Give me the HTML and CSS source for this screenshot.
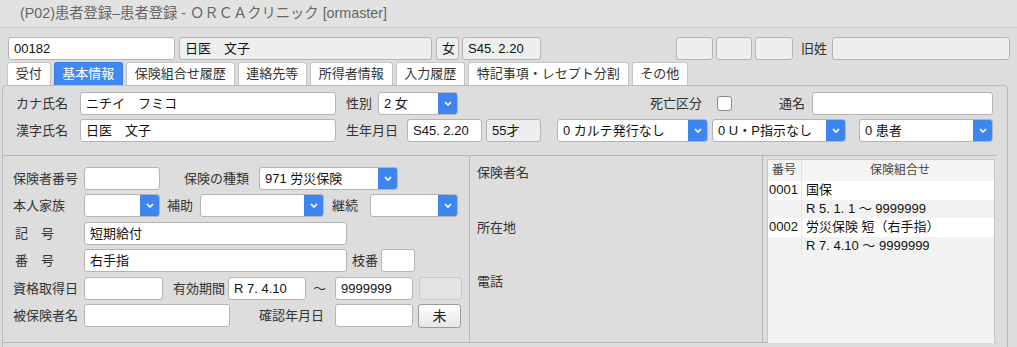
FILE: index.html
```html
<!DOCTYPE html>
<html lang="ja">
<head>
  <meta charset="UTF-8" />
  <title>(P02)患者登録–患者登録</title>
  <link rel="stylesheet" href="styles.css">
</head>
<body>
  <div class="titlebar">(P02)患者登録–患者登録 - ＯＲＣＡクリニック [ormaster]</div>

  <div class="toprow">
    <div class="field w167">00182</div>
    <div class="field ro w253 ml4">日医　文子</div>
    <div class="field ro w23 ml4 center">女</div>
    <div class="field ro w79 ml3">S45. 2.20</div>
    <div class="field ro w37 ml135"></div>
    <div class="field ro w36 ml3"></div>
    <div class="field ro w38 ml3"></div>
    <div class="label w31 ml8">旧姓</div>
    <div class="field ro w178"></div>
  </div>

  <div class="tabs">
    <div class="tab">受付</div>
    <div class="tab active">基本情報</div>
    <div class="tab">保険組合せ履歴</div>
    <div class="tab">連絡先等</div>
    <div class="tab">所得者情報</div>
    <div class="tab">入力履歴</div>
    <div class="tab">特記事項・レセプト分割</div>
    <div class="tab">その他</div>
  </div>

  <div class="frame">
    <div class="basic">
      <div class="row">
        <div class="label w64">カナ氏名</div>
        <div class="field w256">ニチイ　フミコ</div>
        <div class="label w32 ml10">性別</div>
        <div class="select w80"><span>2 女</span><i class="arrow"></i></div>
        <div class="label w67 ml192">死亡区分</div>
        <div class="check"></div>
        <div class="label w33 ml47">通名</div>
        <div class="field w181"></div>
      </div>
      <div class="row">
        <div class="label w64">漢字氏名</div>
        <div class="field w256">日医　文子</div>
        <div class="label w61 ml10">生年月日</div>
        <div class="field w75">S45. 2.20</div>
        <div class="field ro w55 ml4">55才</div>
        <div class="select w151 ml16"><span>0 カルテ発行なし</span><i class="arrow"></i></div>
        <div class="select w134 ml4"><span>0 U・P指示なし</span><i class="arrow"></i></div>
        <div class="select w134 ml13"><span>0 患者</span><i class="arrow"></i></div>
      </div>
    </div>

    <div class="lower">
      <div class="insurance">
        <div class="row">
          <div class="label w71">保険者番号</div>
          <div class="field w76"></div>
          <div class="label w75 ml24">保険の種類</div>
          <div class="select w139"><span>971 労災保険</span><i class="arrow"></i></div>
        </div>
        <div class="row">
          <div class="label w71">本人家族</div>
          <div class="select w76"><span></span><i class="arrow"></i></div>
          <div class="label w33 ml7">補助</div>
          <div class="select w124"><span></span><i class="arrow"></i></div>
          <div class="label w38 ml8">継続</div>
          <div class="select w88"><span></span><i class="arrow"></i></div>
        </div>
        <div class="row">
          <div class="label w71 indent">記　号</div>
          <div class="field w263">短期給付</div>
        </div>
        <div class="row">
          <div class="label w71 indent">番　号</div>
          <div class="field w263">右手指</div>
          <div class="label w29 ml5">枝番</div>
          <div class="field w34"></div>
        </div>
        <div class="row">
          <div class="label w71">資格取得日</div>
          <div class="field w79"></div>
          <div class="label w55 ml10">有効期間</div>
          <div class="field w78">R 7. 4.10</div>
          <div class="label w22 ml7">〜</div>
          <div class="field w78">9999999</div>
          <div class="field off w43 ml6"></div>
        </div>
        <div class="row">
          <div class="label w71">被保険者名</div>
          <div class="field w146"></div>
          <div class="label w76 ml29">確認年月日</div>
          <div class="field w78"></div>
          <div class="btn w43 ml5">未</div>
        </div>
      </div>

      <div class="insurer">
        <div class="info">保険者名</div>
        <div class="info">所在地</div>
        <div class="info">電話</div>
      </div>

      <div class="combos">
        <div class="table">
          <div class="trow head"><div class="no">番号</div><div class="desc center">保険組合せ</div></div>
          <div class="trow"><div class="no">0001</div><div class="desc">国保</div></div>
          <div class="trow alt"><div class="no"></div><div class="desc">R 5. 1. 1 〜 9999999</div></div>
          <div class="trow"><div class="no">0002</div><div class="desc">労災保険 短（右手指）</div></div>
          <div class="trow alt"><div class="no"></div><div class="desc">R 7. 4.10 〜 9999999</div></div>
        </div>
      </div>
    </div>
  </div>
</body>
</html>
```

FILE: styles.css
```css
* {
  box-sizing: border-box;
}

body {
  margin: 0;
  height: 347px;
  overflow: hidden;
  background: #dddddd;
  color: #333;
  font-family: "Liberation Sans", "Noto Sans CJK JP", sans-serif;
  font-size: 13px;
}

.titlebar {
  height: 28px;
  line-height: 27px;
  padding-left: 20px;
  font-size: 14.3px;
  color: #666;
  background: #e2e2e2;
  border-bottom: 1px solid #c4c4c4;
}

.toprow {
  display: flex;
  margin-top: 9px;
  padding-left: 8px;
  height: 23px;
}

.field {
  height: 23px;
  line-height: 21px;
  padding: 0 5px;
  background: #fff;
  border: 1px solid #b4b4b4;
  border-radius: 3px;
  white-space: nowrap;
  overflow: hidden;
  color: #111;
}

.field.ro {
  background: #eeeeee;
}

.field.off {
  background: #e3e3e3;
  border-color: #c8c8c8;
}

.center {
  text-align: center;
}

.label {
  height: 23px;
  line-height: 23px;
  white-space: nowrap;
  color: #333;
}

.label.indent {
  padding-left: 2px;
}

.select {
  display: flex;
  height: 23px;
  background: #fff;
  border: 1px solid #b4b4b4;
  border-radius: 3px;
  overflow: hidden;
  color: #111;
}

.select span {
  flex: 1;
  line-height: 21px;
  padding-left: 5px;
  white-space: nowrap;
  overflow: hidden;
}

.arrow {
  width: 20px;
  margin: -1px -1px -1px 0;
  background: #3f85f0 url("data:image/svg+xml,%3Csvg xmlns='http://www.w3.org/2000/svg' width='8' height='5' viewBox='0 0 8 5'%3E%3Cpath d='M1 1l3 3 3-3' fill='none' stroke='%23fff' stroke-width='1.6'/%3E%3C/svg%3E") no-repeat center;
  border-radius: 0 3px 3px 0;
}

.check {
  width: 15px;
  height: 15px;
  margin-top: 4px;
  background: #fff;
  border: 1px solid #8a8a8a;
  border-radius: 3px;
}

.btn {
  height: 24px;
  line-height: 22px;
  text-align: center;
  font-size: 14px;
  background: linear-gradient(#ffffff, #e6e6e6);
  border: 1px solid #9a9a9a;
  border-radius: 3px;
  color: #222;
}

/* tabs */
.tabs {
  display: flex;
  gap: 3px;
  margin-top: 2px;
  padding-left: 7px;
  height: 23px;
}

.tab {
  padding: 0 7.75px;
  line-height: 22px;
  background: #fff;
  border: 1px solid #c6c6c6;
  border-bottom: none;
  border-radius: 3px 3px 0 0;
  color: #333;
}

.tab.active {
  background: #4088f2;
  border-color: #3a7de0;
  color: #fff;
}

/* frame */
.frame {
  margin-left: 2px;
  width: 1006px;
  height: 262px;
  border: 1px solid #bcbcbc;
  border-bottom: none;
  border-radius: 4px 4px 0 0;
}

.basic {
  display: flex;
  flex-direction: column;
  gap: 4px;
  height: 69px;
  padding: 6px 0 0 13px;
}

.row {
  display: flex;
}

.lower {
  display: flex;
  width: 994px;
  height: 188px;
  border-top: 1px solid #b8b8b8;
  border-bottom: 1px solid #b8b8b8;
}

.insurance {
  width: 467px;
  display: flex;
  flex-direction: column;
  gap: 4.4px;
  padding: 11px 0 0 10px;
  border-right: 1px solid #b8b8b8;
}

.insurer {
  width: 293px;
  padding: 7px 0 0 7px;
  border-right: 1px solid #b8b8b8;
}

.info {
  height: 54.5px;
  line-height: 20px;
}

.combos {
  flex: 1;
  padding: 3px 2px 0 4px;
}

.table {
  height: 184px;
  background: #f2f2f2;
  border: 1px solid #c8c8c8;
  border-bottom: none;
}

.trow {
  display: flex;
  height: 18.5px;
  line-height: 18px;
  background: #fff;
  color: #111;
}

.trow.alt {
  background: #f2f2f2;
}

.trow.head {
  height: 21px;
  line-height: 21px;
  font-size: 12px;
  background: #f4f4f4;
  color: #444;
}

.trow .no {
  width: 34px;
  padding-left: 1px;
  border-right: 1px solid #e2e2e2;
}

.trow.head .no {
  padding-left: 4px;
}

.trow .desc {
  flex: 1;
  padding-left: 4px;
  white-space: nowrap;
}

/* widths and offsets */
.w22 { width: 22px; }
.w23 { width: 23px; }
.w29 { width: 29px; }
.w31 { width: 31px; }
.w32 { width: 32px; }
.w33 { width: 33px; }
.w34 { width: 34px; }
.w36 { width: 36px; }
.w37 { width: 37px; }
.w38 { width: 38px; }
.w43 { width: 43px; }
.w55 { width: 55px; }
.w61 { width: 61px; }
.w64 { width: 64px; }
.w67 { width: 67px; }
.w71 { width: 71px; }
.w75 { width: 75px; }
.w76 { width: 76px; }
.w78 { width: 78px; }
.w79 { width: 79px; }
.w80 { width: 80px; }
.w88 { width: 88px; }
.w124 { width: 124px; }
.w134 { width: 134px; }
.w139 { width: 139px; }
.w146 { width: 146px; }
.w151 { width: 151px; }
.w167 { width: 167px; }
.w178 { width: 178px; }
.w181 { width: 181px; }
.w253 { width: 253px; }
.w256 { width: 256px; }
.w263 { width: 263px; }

.ml3 { margin-left: 3px; }
.ml4 { margin-left: 4px; }
.ml5 { margin-left: 5px; }
.ml6 { margin-left: 6px; }
.ml7 { margin-left: 7px; }
.ml8 { margin-left: 8px; }
.ml10 { margin-left: 10px; }
.ml13 { margin-left: 13px; }
.ml16 { margin-left: 16px; }
.ml24 { margin-left: 24px; }
.ml29 { margin-left: 29px; }
.ml47 { margin-left: 47px; }
.ml135 { margin-left: 135px; }
.ml192 { margin-left: 192px; }
```
